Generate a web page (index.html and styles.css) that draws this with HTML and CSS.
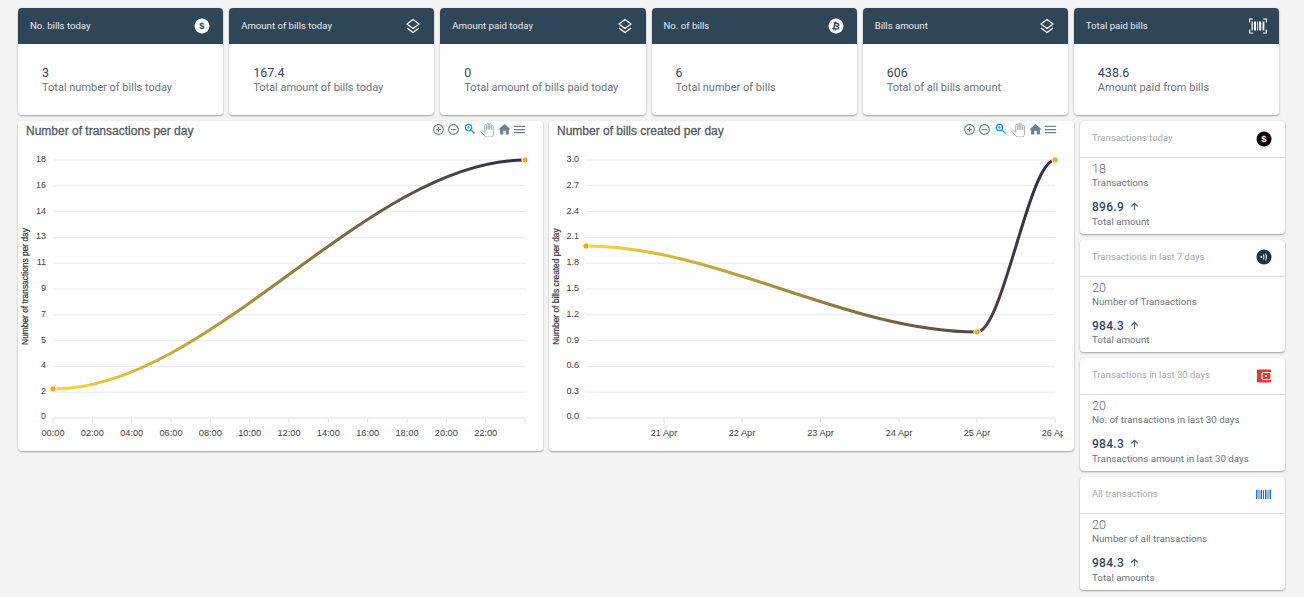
FILE: index.html
```html
<!DOCTYPE html>
<html lang="en">
<head>
    <meta charset="UTF-8">
    <meta name="viewport" content="width=device-width, initial-scale=1.0">
    <title>Dashboard</title>
    <link rel="stylesheet" href="styles.css">
</head>
<body>
    <!-- Bills summary -->
    <section class="top-row">
        <div class="stat-card">
            <div class="stat-head">
                <span class="stat-name">No. bills today</span>
                <svg class="head-icon" viewBox="0 0 16 16"><circle cx="8" cy="8" r="7.5" fill="#fff"/><text x="8" y="11.2" class="icon-glyph dark-glyph">$</text></svg>
            </div>
            <div class="stat-body"><div class="stat-value">3</div><div class="stat-sub">Total number of bills today</div></div>
        </div>
        <div class="stat-card">
            <div class="stat-head">
                <span class="stat-name">Amount of bills today</span>
                <svg class="head-icon" viewBox="0 0 16 16"><path class="layers" d="M8 1.5 14 6 8 10.5 2 6Z"/><path class="layers" d="M2 10 8 14.5 14 10"/></svg>
            </div>
            <div class="stat-body"><div class="stat-value">167.4</div><div class="stat-sub">Total amount of bills today</div></div>
        </div>
        <div class="stat-card">
            <div class="stat-head">
                <span class="stat-name">Amount paid today</span>
                <svg class="head-icon" viewBox="0 0 16 16"><path class="layers" d="M8 1.5 14 6 8 10.5 2 6Z"/><path class="layers" d="M2 10 8 14.5 14 10"/></svg>
            </div>
            <div class="stat-body"><div class="stat-value">0</div><div class="stat-sub">Total amount of bills paid today</div></div>
        </div>
        <div class="stat-card">
            <div class="stat-head">
                <span class="stat-name">No. of bills</span>
                <svg class="head-icon" viewBox="0 0 16 16"><circle cx="8" cy="8" r="7.5" fill="#fff"/><text x="8" y="11.5" class="icon-glyph dark-glyph coin-glyph" transform="rotate(12 8 8)">₿</text></svg>
            </div>
            <div class="stat-body"><div class="stat-value">6</div><div class="stat-sub">Total number of bills</div></div>
        </div>
        <div class="stat-card">
            <div class="stat-head">
                <span class="stat-name">Bills amount</span>
                <svg class="head-icon" viewBox="0 0 16 16"><path class="layers" d="M8 1.5 14 6 8 10.5 2 6Z"/><path class="layers" d="M2 10 8 14.5 14 10"/></svg>
            </div>
            <div class="stat-body"><div class="stat-value">606</div><div class="stat-sub">Total of all bills amount</div></div>
        </div>
        <div class="stat-card">
            <div class="stat-head">
                <span class="stat-name">Total paid bills</span>
                <svg class="scan-icon" viewBox="0 0 20 18"><path fill="none" stroke="#fff" stroke-width="1.2" stroke-linecap="round" d="M1.600 5V2H4.500M15.500 2H18.400V5M1.600 13V16H4.500M15.500 16H18.400V13"/><path fill="#fff" d="M3.500 4.500h1.300v9H3.500zM6 4.500h2v9H6zM9.200 4.500h.9v9h-.9zM11.200 4.500h2v9h-2zM14.600 4.500h1.800v9h-1.800z"/></svg>
            </div>
            <div class="stat-body"><div class="stat-value">438.6</div><div class="stat-sub">Amount paid from bills</div></div>
        </div>
    </section>

    <section class="lower-row">
        <!-- Transactions chart -->
        <div class="chart-card">
            <svg class="chart" viewBox="0 0 525 329">
                <defs>
                    <linearGradient id="fade-one" gradientUnits="userSpaceOnUse" x1="35" y1="0" x2="507" y2="0">
                        <stop offset="0" stop-color="#fbd637"/>
                        <stop offset="1" stop-color="#2b2848"/>
                    </linearGradient>
                </defs>
                <text x="8" y="13" class="chart-title">Number of transactions per day</text>
                <g class="grid">
                    <path d="M35 38H508M35 63.800H508M35 89.600H508M35 115.400H508M35 141.200H508M35 167H508M35 192.800H508M35 218.600H508M35 244.400H508M35 270.200H508"/>
                    <path class="axis" d="M35 296H508M35 296v5M74.300 296v5M113.700 296v5M153 296v5M192.300 296v5M231.700 296v5M271 296v5M310.300 296v5M349.700 296v5M389 296v5M428.300 296v5M467.700 296v5M507 296v5"/>
                </g>
                <g class="y-labels">
                    <text x="28" y="40">18</text><text x="28" y="65.500">16</text><text x="28" y="91.500">14</text><text x="28" y="117">13</text><text x="28" y="143">11</text><text x="28" y="169">9</text><text x="28" y="194.500">7</text><text x="28" y="220.500">5</text><text x="28" y="246">4</text><text x="28" y="272">2</text><text x="28" y="297">0</text>
                </g>
                <g class="x-labels">
                    <text x="35" y="314">00:00</text><text x="74.300" y="314">02:00</text><text x="113.700" y="314">04:00</text><text x="153" y="314">06:00</text><text x="192.300" y="314">08:00</text><text x="231.700" y="314">10:00</text><text x="271" y="314">12:00</text><text x="310.300" y="314">14:00</text><text x="349.700" y="314">16:00</text><text x="389" y="314">18:00</text><text x="428.300" y="314">20:00</text><text x="467.700" y="314">22:00</text>
                </g>
                <text class="y-title" transform="translate(10 164.500) rotate(-90)">Number of transactions per day</text>
                <path class="curve" stroke="url(#fade-one)" d="M35 267C192 267 350 38 507 38"/>
                <circle class="marker" cx="35" cy="267" r="3.200"/>
                <circle class="marker" cx="507" cy="38" r="3.200"/>
                <g class="toolbar">
                    <svg x="414" y="1" width="13" height="13" viewBox="0 0 24 24"><path d="M13 7h-2v4H7v2h4v4h2v-4h4v-2h-4V7zm-1-5C6.490 2 2 6.490 2 12s4.490 10 10 10 10-4.490 10-10S17.510 2 12 2zm0 18c-4.410 0-8-3.590-8-8s3.590-8 8-8 8 3.590 8 8-3.590 8-8 8z"/></svg>
                    <svg x="429" y="1" width="13" height="13" viewBox="0 0 24 24"><path d="M7 11v2h10v-2H7zm5-9C6.480 2 2 6.480 2 12s4.480 10 10 10 10-4.480 10-10S17.520 2 12 2zm0 18c-4.410 0-8-3.590-8-8s3.590-8 8-8 8 3.590 8 8-3.590 8-8 8z"/></svg>
                    <svg class="tool-on" x="445" y="0" width="14" height="14" viewBox="0 0 24 24"><path d="M15.500 14h-.79l-.28-.27C15.410 12.590 16 11.110 16 9.500 16 5.910 13.090 3 9.500 3S3 5.910 3 9.500 5.910 16 9.500 16c1.610 0 3.090-.59 4.230-1.570l.27.28v.79l5 4.990L20.490 19l-4.990-5zm-6 0C7.010 14 5 11.990 5 9.500S7.010 5 9.500 5 14 7.010 14 9.500 11.990 14 9.500 14z"/><path d="M12 10h-2v2H9v-2H7V9h2V7h1v2h2v1z"/></svg>
                    <svg class="tool-off" x="462" y="1" width="14" height="14" viewBox="0 0 24 24"><path d="M23 5.500V20c0 2.200-1.800 4-4 4h-7.300c-1.080 0-2.100-.43-2.850-1.190L1 14.830s1.260-1.230 1.300-1.250c.22-.19.49-.29.79-.29.22 0 .42.06.6.16.04.01 4.310 2.460 4.310 2.460V4c0-.83.67-1.500 1.500-1.500S11 3.170 11 4v7h1V1.500c0-.83.67-1.500 1.500-1.500S15 .67 15 1.500V11h1V2.500c0-.83.67-1.500 1.500-1.500s1.500.67 1.500 1.500V11h1V5.500c0-.83.67-1.500 1.500-1.500s1.500.67 1.500 1.500z"/></svg>
                    <svg x="479" y="0" width="15" height="15" viewBox="0 0 24 24"><path d="M10 20v-6h4v6h5v-8h3L12 3 2 12h3v8z"/></svg>
                    <svg x="494" y="0" width="15" height="15" viewBox="0 0 24 24"><path d="M3 18h18v-2H3v2zm0-5h18v-2H3v2zm0-7v2h18V6H3z"/></svg>
                </g>
            </svg>
        </div>

        <!-- Bills chart -->
        <div class="chart-card">
            <svg class="chart" viewBox="0 0 525 329">
                <defs>
                    <linearGradient id="fade-two" gradientUnits="userSpaceOnUse" x1="37" y1="0" x2="506" y2="0">
                        <stop offset="0" stop-color="#fbd637"/>
                        <stop offset="1" stop-color="#2b2848"/>
                    </linearGradient>
                    <clipPath id="clip-two"><rect x="0" y="0" width="514" height="329"/></clipPath>
                </defs>
                <text x="8" y="13" class="chart-title">Number of bills created per day</text>
                <g class="grid">
                    <path d="M37 38H506M37 63.800H506M37 89.600H506M37 115.400H506M37 141.200H506M37 167H506M37 192.800H506M37 218.600H506M37 244.400H506M37 270.200H506"/>
                    <path class="axis" d="M37 296H506M115 296v5M193 296v5M271.500 296v5M350 296v5M428 296v5M506 296v5"/>
                </g>
                <g class="y-labels">
                    <text x="30" y="40">3.0</text><text x="30" y="65.500">2.7</text><text x="30" y="91.500">2.4</text><text x="30" y="117">2.1</text><text x="30" y="143">1.8</text><text x="30" y="169">1.5</text><text x="30" y="194.500">1.2</text><text x="30" y="220.500">0.9</text><text x="30" y="246">0.6</text><text x="30" y="272">0.3</text><text x="30" y="297">0.0</text>
                </g>
                <g class="x-labels" clip-path="url(#clip-two)">
                    <text x="115" y="314">21 Apr</text><text x="193" y="314">22 Apr</text><text x="271.500" y="314">23 Apr</text><text x="350" y="314">24 Apr</text><text x="428" y="314">25 Apr</text><text x="506" y="314">26 Apr</text>
                </g>
                <text class="y-title" transform="translate(10 164.500) rotate(-90)">Number of bills created per day</text>
                <path class="curve" stroke="url(#fade-two)" d="M37 124C167 124 298 210 428 210C454 210 480 38 506 38"/>
                <circle class="marker" cx="37" cy="124" r="3.200"/>
                <circle class="marker" cx="428" cy="210" r="3.200"/>
                <circle class="marker" cx="506" cy="38" r="3.200"/>
                <g class="toolbar">
                    <svg x="414" y="1" width="13" height="13" viewBox="0 0 24 24"><path d="M13 7h-2v4H7v2h4v4h2v-4h4v-2h-4V7zm-1-5C6.490 2 2 6.490 2 12s4.490 10 10 10 10-4.490 10-10S17.510 2 12 2zm0 18c-4.410 0-8-3.590-8-8s3.590-8 8-8 8 3.590 8 8-3.590 8-8 8z"/></svg>
                    <svg x="429" y="1" width="13" height="13" viewBox="0 0 24 24"><path d="M7 11v2h10v-2H7zm5-9C6.480 2 2 6.480 2 12s4.480 10 10 10 10-4.480 10-10S17.520 2 12 2zm0 18c-4.410 0-8-3.590-8-8s3.590-8 8-8 8 3.590 8 8-3.590 8-8 8z"/></svg>
                    <svg class="tool-on" x="445" y="0" width="14" height="14" viewBox="0 0 24 24"><path d="M15.500 14h-.79l-.28-.27C15.410 12.590 16 11.110 16 9.500 16 5.910 13.090 3 9.500 3S3 5.910 3 9.500 5.910 16 9.500 16c1.610 0 3.090-.59 4.230-1.570l.27.28v.79l5 4.990L20.490 19l-4.990-5zm-6 0C7.010 14 5 11.990 5 9.500S7.010 5 9.500 5 14 7.010 14 9.500 11.990 14 9.500 14z"/><path d="M12 10h-2v2H9v-2H7V9h2V7h1v2h2v1z"/></svg>
                    <svg class="tool-off" x="462" y="1" width="14" height="14" viewBox="0 0 24 24"><path d="M23 5.500V20c0 2.200-1.800 4-4 4h-7.300c-1.080 0-2.100-.43-2.850-1.190L1 14.830s1.260-1.230 1.300-1.250c.22-.19.49-.29.79-.29.22 0 .42.06.6.16.04.01 4.310 2.460 4.310 2.460V4c0-.83.67-1.500 1.500-1.500S11 3.170 11 4v7h1V1.500c0-.83.67-1.500 1.500-1.500S15 .67 15 1.500V11h1V2.500c0-.83.67-1.500 1.500-1.500s1.500.67 1.500 1.500V11h1V5.500c0-.83.67-1.500 1.500-1.500s1.500.67 1.500 1.500z"/></svg>
                    <svg x="479" y="0" width="15" height="15" viewBox="0 0 24 24"><path d="M10 20v-6h4v6h5v-8h3L12 3 2 12h3v8z"/></svg>
                    <svg x="494" y="0" width="15" height="15" viewBox="0 0 24 24"><path d="M3 18h18v-2H3v2zm0-5h18v-2H3v2zm0-7v2h18V6H3z"/></svg>
                </g>
            </svg>
        </div>

        <!-- Transactions summary -->
        <div class="side-col">
            <div class="side-card">
                <div class="side-head">
                    <span>Transactions today</span>
                    <svg class="side-icon" viewBox="0 0 16 16"><circle cx="8" cy="8" r="7.500" fill="#000"/><text x="8" y="11.200" class="icon-glyph white-glyph">$</text></svg>
                </div>
                <div class="side-body">
                    <div class="side-count">18</div>
                    <div class="side-label">Transactions</div>
                    <div class="side-amount">896.9 <svg class="up-arrow" viewBox="0 0 10 10"><path d="M5 9V1.500M1.500 5 5 1.500 8.500 5"/></svg></div>
                    <div class="side-label side-label-end">Total amount</div>
                </div>
            </div>
            <div class="side-card">
                <div class="side-head">
                    <span>Transactions in last 7 days</span>
                    <svg class="side-icon" viewBox="0 0 16 16"><circle cx="8" cy="8" r="7.500" fill="#1b2f45"/><path fill="#fff" d="M4.600 6.900h1.500v2.200H4.600z"/><path fill="none" stroke="#fff" stroke-width="1" d="M7.500 5.500q1 2.500 0 5M9.700 4.500q1.500 3.500 0 7"/></svg>
                </div>
                <div class="side-body">
                    <div class="side-count">20</div>
                    <div class="side-label">Number of Transactions</div>
                    <div class="side-amount">984.3 <svg class="up-arrow" viewBox="0 0 10 10"><path d="M5 9V1.500M1.500 5 5 1.500 8.500 5"/></svg></div>
                    <div class="side-label side-label-end">Total amount</div>
                </div>
            </div>
            <div class="side-card">
                <div class="side-head">
                    <span>Transactions in last 30 days</span>
                    <svg class="side-icon" viewBox="0 0 16 16"><rect x="1" y="1.500" width="14" height="13" rx="1" fill="#e53935"/><rect x="6" y="4.500" width="9" height="7" rx="1.500" fill="#e53935" stroke="#fff" stroke-width="1.200"/><rect x="9" y="7" width="2" height="2" fill="#fff"/></svg>
                </div>
                <div class="side-body">
                    <div class="side-count">20</div>
                    <div class="side-label">No. of transactions in last 30 days</div>
                    <div class="side-amount">984.3 <svg class="up-arrow" viewBox="0 0 10 10"><path d="M5 9V1.500M1.500 5 5 1.500 8.500 5"/></svg></div>
                    <div class="side-label side-label-end">Transactions amount in last 30 days</div>
                </div>
            </div>
            <div class="side-card">
                <div class="side-head">
                    <span>All transactions</span>
                    <svg class="side-icon" viewBox="0 0 16 16"><path fill="#1976d2" d="M0 3h1.500v9H0zM2.500 3h1v9h-1zM4.500 3H6v9H4.500zM7 3h1v9H7zM9 3h1.500v9H9zM11.500 3h1v9h-1zM13.500 3H15v9h-1.500z"/></svg>
                </div>
                <div class="side-body">
                    <div class="side-count">20</div>
                    <div class="side-label">Number of all transactions</div>
                    <div class="side-amount">984.3 <svg class="up-arrow" viewBox="0 0 10 10"><path d="M5 9V1.500M1.500 5 5 1.500 8.500 5"/></svg></div>
                    <div class="side-label side-label-end">Total amounts</div>
                </div>
            </div>
        </div>
    </section>
</body>
</html>
```

FILE: styles.css
```css
* {
    box-sizing: border-box;
}
body {
    margin: 0;
    padding: 8px 18px 0;
    height: 597px;
    overflow: hidden;
    background-color: #f4f4f4;
    font-family: Roboto, "Noto Sans", sans-serif;
}
.top-row {
    display: grid;
    grid-template-columns: repeat(6, 1fr);
    gap: 6px;
    width: 1261px;
}
.stat-card {
    height: 107px;
    background-color: #fff;
    border-radius: 4px;
    box-shadow: 0 1px 2px rgba(0, 0, 0, 0.35);
    overflow: hidden;
}
.stat-head {
    height: 36px;
    padding: 0 12px;
    display: flex;
    align-items: center;
    justify-content: space-between;
    background-color: #2f4558;
    color: #e8ebee;
    font-size: 9.6px;
}
.stat-name {
    margin-bottom: 2px;
}
.head-icon {
    width: 16px;
    height: 16px;
    margin-right: 1px;
}
.scan-icon {
    width: 20px;
    height: 18px;
    margin-right: -1px;
}
.layers {
    fill: none;
    stroke: #fff;
    stroke-width: 1.3;
    stroke-linejoin: round;
}
.icon-glyph {
    font-family: "Liberation Sans", sans-serif;
    font-size: 9.5px;
    font-weight: 700;
    text-anchor: middle;
}
.coin-glyph {
    font-family: "DejaVu Sans", sans-serif;
}
.dark-glyph {
    fill: #2f4558;
}
.white-glyph {
    fill: #fff;
}
.stat-body {
    padding: 22px 24px 0;
}
.stat-value {
    font-size: 12.5px;
    line-height: 14px;
    color: #34495e;
}
.stat-sub {
    margin-top: 1px;
    font-size: 11px;
    line-height: 14px;
    color: #6c757d;
}
.lower-row {
    display: flex;
    align-items: flex-start;
    gap: 6px;
    margin-top: 6px;
    width: 1267px;
}
.chart-card {
    width: 525px;
    height: 330px;
    padding-top: 1px;
    flex-shrink: 0;
    background-color: #fff;
    border-radius: 4px;
    box-shadow: 0 1px 2px rgba(0, 0, 0, 0.35);
}
.chart {
    display: block;
    width: 525px;
    height: 329px;
    font-family: "Liberation Sans", sans-serif;
}
.chart-title {
    font-size: 12px;
    fill: #555a5e;
    stroke: #555a5e;
    stroke-width: 0.3px;
}
.grid path {
    fill: none;
    stroke: #e9e9e9;
    stroke-width: 1;
}
.grid .axis {
    stroke: #e0e0e0;
}
.y-labels text {
    font-size: 9px;
    fill: #444;
    text-anchor: end;
}
.x-labels text {
    font-size: 9.2px;
    fill: #444;
    text-anchor: middle;
}
.y-title {
    font-size: 8.4px;
    fill: #333;
    stroke: #333;
    stroke-width: 0.2px;
    text-anchor: middle;
}
.curve {
    fill: none;
    stroke-width: 3;
}
.marker {
    fill: #ffa41b;
    stroke: #fff;
    stroke-width: 1;
}
.toolbar path {
    fill: #6e8192;
}
.toolbar .tool-on path {
    fill: #008ffb;
}
.toolbar .tool-off path {
    fill: #fff;
    stroke: #9aa6b0;
    stroke-width: 1.5;
}
.side-col {
    width: 205px;
    flex-shrink: 0;
    display: flex;
    flex-direction: column;
    gap: 6px;
}
.side-card {
    height: 112.7px;
    background-color: #fff;
    border-radius: 4px;
    box-shadow: 0 1px 2px rgba(0, 0, 0, 0.35);
}
.side-head {
    height: 37px;
    padding: 0 12px 3px;
    display: flex;
    align-items: center;
    justify-content: space-between;
    border-bottom: 1px solid #e2e2e2;
    color: #aaa;
    font-size: 9.5px;
}
.side-icon {
    width: 16px;
    height: 16px;
    margin-right: 1px;
    margin-top: 2px;
}
.side-body {
    padding: 4px 12px 0;
}
.side-count {
    font-size: 12.5px;
    line-height: 14px;
    font-weight: 300;
    color: #5b6770;
}
.side-label {
    font-size: 9.75px;
    line-height: 11px;
    margin-top: 1px;
    color: #6c757d;
}
.side-label-end {
    margin-top: 1.5px;
}
.side-amount {
    margin-top: 12px;
    font-size: 12px;
    line-height: 14px;
    font-weight: 500;
    letter-spacing: 0.3px;
    color: #34495e;
}
.up-arrow {
    width: 9px;
    height: 9px;
    margin-left: 3px;
    fill: none;
    stroke: #4f6172;
    stroke-width: 1.3;
}
```
